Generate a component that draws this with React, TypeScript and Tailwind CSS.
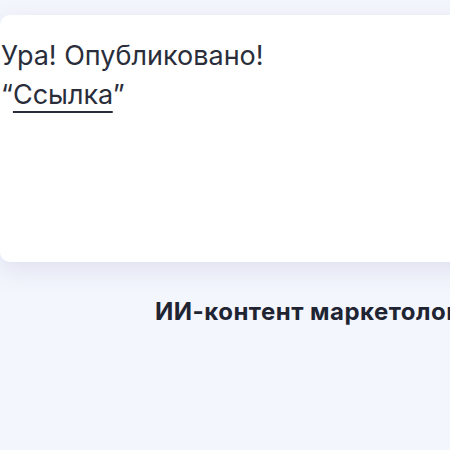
export default function App() {
	return (
		<div className="h-[450px] w-[450px] overflow-hidden bg-[#f4f6fd] font-['Inter','Noto_Sans',sans-serif]">
			<div className="pt-[15px]">
				{/* Published card */}
				<div className="-mr-[40px] h-[247px] rounded-l-[10px] rounded-r-[10px] bg-white pl-[1px] pt-[21px] shadow-[0_8px_24px_rgba(120,130,170,0.18)]">
					<p className="text-[27px] leading-[39px] text-[#2a2e3b]">Ура! Опубликовано!</p>
					<p className="text-[27px] leading-[39px] text-[#2a2e3b]">
						“<span className="underline decoration-[2px] underline-offset-[7px]">Ссылка</span>”
					</p>
				</div>
			</div>

			<h2 className="mt-[32px] whitespace-nowrap pl-[155px] text-[24px] font-bold tracking-[0.02em] text-[#1f2433]">ИИ-контент маркетологам</h2>
		</div>
	);
}
